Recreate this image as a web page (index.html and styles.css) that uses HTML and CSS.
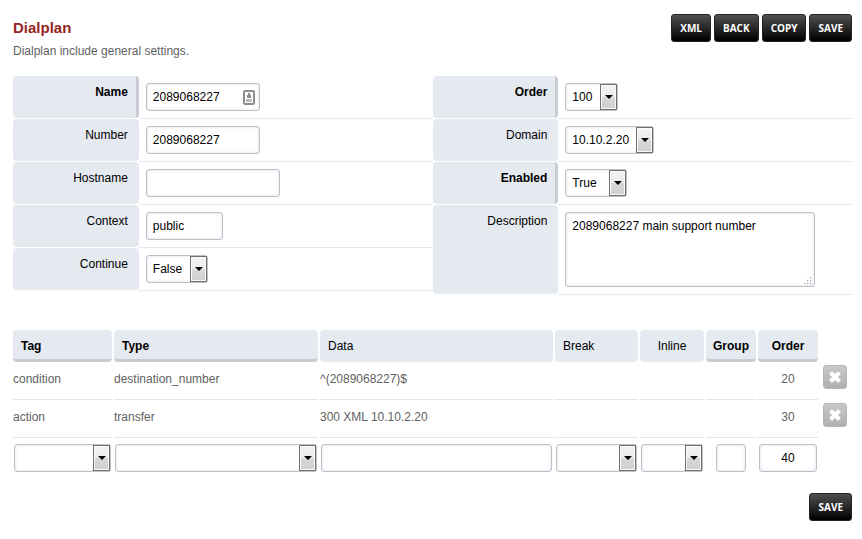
FILE: index.html
```html
<!DOCTYPE html>
<html lang="en">
<head>
<meta charset="utf-8">
<title>Dialplan</title>
<link rel="stylesheet" href="styles.css">
</head>
<body>
<form class="page">
  <header class="head">
    <div>
      <h1>Dialplan</h1>
      <p>Dialplan include general settings.</p>
    </div>
    <div class="actions">
      <button type="button" class="btn">XML</button>
      <button type="button" class="btn">BACK</button>
      <button type="button" class="btn">COPY</button>
      <button type="submit" class="btn">SAVE</button>
    </div>
  </header>

  <div class="fields">
    <div class="column">
      <div class="row">
        <label class="required" for="name">Name</label>
        <div class="value">
          <span class="filled">
            <input class="text medium" id="name" type="text" value="2089068227">
            <svg class="autofill" viewBox="0 0 12 15" width="12" height="15" aria-hidden="true">
              <rect x="1" y="1" width="10" height="13" rx="1" fill="#fff" stroke="#8f8f8f" stroke-width="2"/>
              <path d="M5 3h2v2h1v3H4V5h1z" fill="#8c8c8c"/>
              <path d="M3 9h6v3H3z" fill="#bbb"/>
            </svg>
          </span>
        </div>
      </div>
      <div class="row">
        <label for="number">Number</label>
        <div class="value"><input class="text medium" id="number" type="text" value="2089068227"></div>
      </div>
      <div class="row">
        <label for="hostname">Hostname</label>
        <div class="value"><input class="text wide" id="hostname" type="text"></div>
      </div>
      <div class="row">
        <label for="context">Context</label>
        <div class="value"><input class="text short" id="context" type="text" value="public"></div>
      </div>
      <div class="row">
        <label for="continue">Continue</label>
        <div class="value"><span class="pick"><select id="continue"><option>False</option></select></span></div>
      </div>
    </div>
    <div class="column">
      <div class="row">
        <label class="required" for="order">Order</label>
        <div class="value"><span class="pick"><select id="order"><option>100</option></select></span></div>
      </div>
      <div class="row">
        <label for="domain">Domain</label>
        <div class="value"><span class="pick"><select id="domain"><option>10.10.2.20</option></select></span></div>
      </div>
      <div class="row">
        <label class="required" for="enabled">Enabled</label>
        <div class="value"><span class="pick"><select class="roomy" id="enabled"><option>True</option></select></span></div>
      </div>
      <div class="row">
        <label for="description">Description</label>
        <div class="value"><span class="note"><textarea class="text" id="description">2089068227 main support number</textarea>
          <svg class="grip" viewBox="0 0 8 8" width="8" height="8" aria-hidden="true"><path d="M6 0h1v1H6zM3 3h1v1H3zM6 3h1v1H6zM0 6h1v1H0zM3 6h1v1H3zM6 6h1v1H6z" fill="#888" stroke="#bbb" stroke-width=".5"/></svg></span></div>
      </div>
    </div>
  </div>

  <table class="details">
    <colgroup>
      <col class="c-tag"><col class="c-type"><col><col class="c-break"><col class="c-inline"><col class="c-group"><col class="c-order"><col class="c-tools">
    </colgroup>
    <thead>
      <tr>
        <th class="required">Tag</th>
        <th class="required">Type</th>
        <th>Data</th>
        <th>Break</th>
        <th class="center">Inline</th>
        <th class="required center">Group</th>
        <th class="required center">Order</th>
        <td class="tools"></td>
      </tr>
    </thead>
    <tbody>
      <tr>
        <td>condition</td><td>destination_number</td><td>^(2089068227)$</td><td></td><td></td><td></td><td class="center">20</td>
        <td class="tools"><button type="button" class="remove" aria-label="Delete"><svg viewBox="0 0 12 12" width="12" height="12"><path d="M3 1 6 4 9 1 11 3 8 6 11 9 9 11 6 8 3 11 1 9 4 6 1 3z" fill="#fff" stroke="#fff" stroke-width="1.4" stroke-linejoin="round"/></svg></button></td>
      </tr>
      <tr>
        <td>action</td><td>transfer</td><td>300 XML 10.10.2.20</td><td></td><td></td><td></td><td class="center">30</td>
        <td class="tools"><button type="button" class="remove" aria-label="Delete"><svg viewBox="0 0 12 12" width="12" height="12"><path d="M3 1 6 4 9 1 11 3 8 6 11 9 9 11 6 8 3 11 1 9 4 6 1 3z" fill="#fff" stroke="#fff" stroke-width="1.4" stroke-linejoin="round"/></svg></button></td>
      </tr>
    </tbody>
    <tfoot>
      <tr>
        <td><span class="pick"><select aria-label="Tag"><option></option></select></span></td>
        <td><span class="pick"><select aria-label="Type"><option></option></select></span></td>
        <td><input class="text" type="text" aria-label="Data"></td>
        <td><span class="pick"><select aria-label="Break"><option></option></select></span></td>
        <td><span class="pick"><select aria-label="Inline"><option></option></select></span></td>
        <td class="center"><input class="text tiny" type="text" aria-label="Group"></td>
        <td><input class="text center" type="text" aria-label="Order" value="40"></td>
        <td class="tools"></td>
      </tr>
    </tfoot>
  </table>

  <div class="actions bottom">
    <button type="submit" class="btn">SAVE</button>
  </div>
</form>
</body>
</html>
```
FILE: styles.css
```css
*, *::before, *::after { box-sizing: border-box; }

body {
  margin: 0;
  background: #fff;
  color: #5f5f5f;
  font: 12px/16px "Liberation Sans", Arial, sans-serif;
}

.page { padding: 14px 10px 18px 13px; }

.head {
  display: flex;
  justify-content: space-between;
  align-items: flex-start;
  height: 62px;
}
h1 {
  margin: 6px 0 7px;
  color: #952424;
  font-size: 15px;
  line-height: 16px;
}
p { margin: 0; }

.actions { display: flex; gap: 3px; }
.bottom { justify-content: flex-end; margin-top: 21px; }

.btn {
  height: 28px;
  padding: 0 8px;
  border: 1px solid #242424;
  border-radius: 3px;
  background: linear-gradient(#4f4f4f, #000);
  color: #fff;
  font: bold 10px/16px "Open Sans", sans-serif;
}

/* Settings */
.fields { display: grid; grid-template-columns: 1fr 1fr; align-items: start; }
.row { display: grid; grid-template-columns: 30% 1fr; }
.row label {
  margin-bottom: 1px;
  padding: 8px 11px;
  border-radius: 4px;
  background: #e5e9f0;
  color: #000;
  text-align: right;
}
.row label.required {
  padding-right: 8px;
  border-right: 3px solid #c8ccd2;
  font-weight: bold;
}
.value {
  display: flex;
  padding: 7px;
  border-bottom: 1px solid #e5e9f0;
}

/* Controls */
.text, select {
  display: block;
  width: 100%;
  height: 28px;
  margin: 0;
  padding: 0 6px;
  border: 1px solid #c0c0c0;
  border-radius: 3px;
  background: #fff;
  box-shadow: inset 0 0 3px #cddaf5;
  color: #000;
  font: inherit;
}
.medium { width: 114px; }
.wide { width: 134px; }
.short { width: 77px; }
.tiny { width: 30px; margin: 0 auto; }

.pick { position: relative; display: block; }
select { appearance: none; padding-right: 24px; }
select.roomy { padding-right: 29px; }
.pick::before, .pick::after { content: ""; position: absolute; pointer-events: none; }
.pick::before {
  top: 1px;
  right: 1px;
  width: 17px;
  height: 26px;
  border: 1px solid #707070;
  background: linear-gradient(#f3f3f3, #ebebeb 50%, #d8d8d8 51%, #cfcfcf);
  box-shadow: inset 0 0 0 1px #fafafa;
}
.pick::after {
  top: 12px;
  right: 5px;
  border: solid transparent;
  border-width: 4px 4px 0;
  border-top-color: #000;
}

.filled, .note { position: relative; }
.autofill { position: absolute; top: 7px; right: 5px; }
.note { width: 250px; }
textarea.text { height: 75px; padding: 5px 6px; resize: none; }
.grip { position: absolute; right: 3px; bottom: 2px; }

/* Detail rows */
.details {
  width: calc(100% + 4px);
  margin: 35px -2px 0;
  border-spacing: 2px 0;
  table-layout: fixed;
}
.c-tag { width: 99px; }
.c-type { width: 204px; }
.c-break { width: 83px; }
.c-inline { width: 64px; }
.c-group { width: 50px; }
.c-order { width: 60px; }
.c-tools { width: 32px; }

.details th {
  height: 32px;
  padding: 2px 8px 0;
  border-bottom: 3px solid #e5e9f0;
  border-radius: 4px;
  background: #e5e9f0;
  color: #000;
  font-weight: normal;
  text-align: left;
}
.details th.required { border-bottom-color: #c8ccd2; font-weight: bold; }
.details th.center { padding: 2px 0 0; }
.details .center { text-align: center; }
.details td { padding: 0; }
.details tbody td {
  height: 38px;
  padding-bottom: 4px;
  border-bottom: 1px solid #e5e5e5;
}
.details td.tools { padding: 0 0 8px 3px; border: 0; }
.details tfoot td { padding: 6px 1px 0; }

.remove {
  display: grid;
  place-items: center;
  width: 24px;
  height: 24px;
  padding: 0;
  border: 1px solid #b5b5b5;
  border-radius: 3px;
  background: linear-gradient(#c8c8c8, #b0b0b0);
}
```
